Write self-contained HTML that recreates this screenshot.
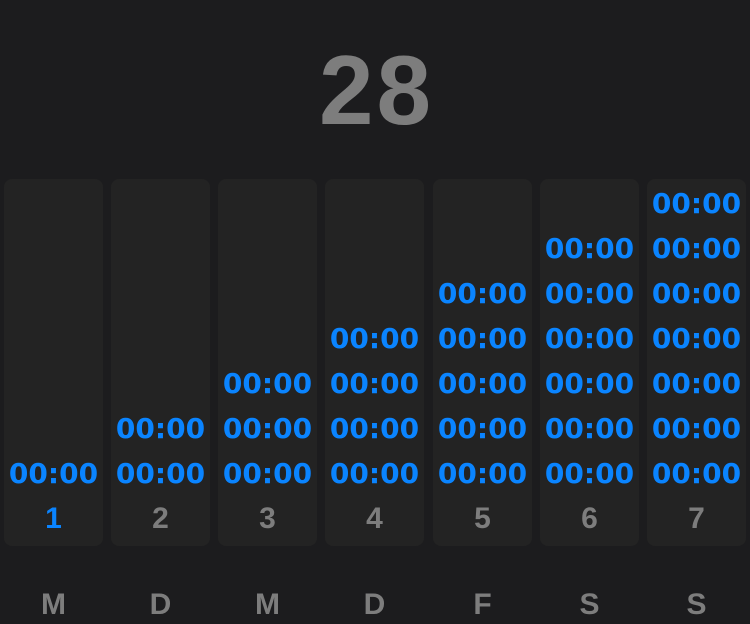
<!DOCTYPE html>
<html><head><style>
html,body{margin:0;padding:0;background:#1c1c1e;width:750px;height:624px;overflow:hidden;font-family:"Liberation Sans",sans-serif;font-weight:bold}
.big{position:absolute;left:0;width:750px;top:40px;text-align:center;font-size:98px;letter-spacing:3px;text-indent:3px;color:#7d7d7d;line-height:100px}
.col{position:absolute;top:179px;height:367px;width:99px;background:#232323;border-radius:8px}
.t{position:absolute;left:0;width:100%;text-align:center;font-family:"DejaVu Sans",sans-serif;font-size:28px;color:#0a84ff;line-height:30px}
.n{position:absolute;left:0;width:100%;text-align:center;font-size:30px;color:#7d7d7d;top:325px;line-height:30px}
.l{position:absolute;top:590px;width:99px;text-align:center;font-size:30px;color:#7d7d7d;line-height:30px}
</style></head><body>
<div class="big">28</div>
<div id="c"></div>
<script>
var xs=[4,111,218,325,433,540,647],L="MDMDFSS",h="";
for(var i=0;i<7;i++){
 h+='<div class="col" style="left:'+xs[i]+'px">';
 for(var j=0;j<=i;j++){h+='<div class="t" style="top:'+(280-45*j)+'px">00:00</div>';}
 h+='<div class="n"'+(i==0?' style="color:#0a84ff"':'')+'>'+(i+1)+'</div></div>';
 h+='<div class="l" style="left:'+xs[i]+'px">'+L[i]+'</div>';
}
document.getElementById('c').innerHTML=h;
</script>
</body></html>
